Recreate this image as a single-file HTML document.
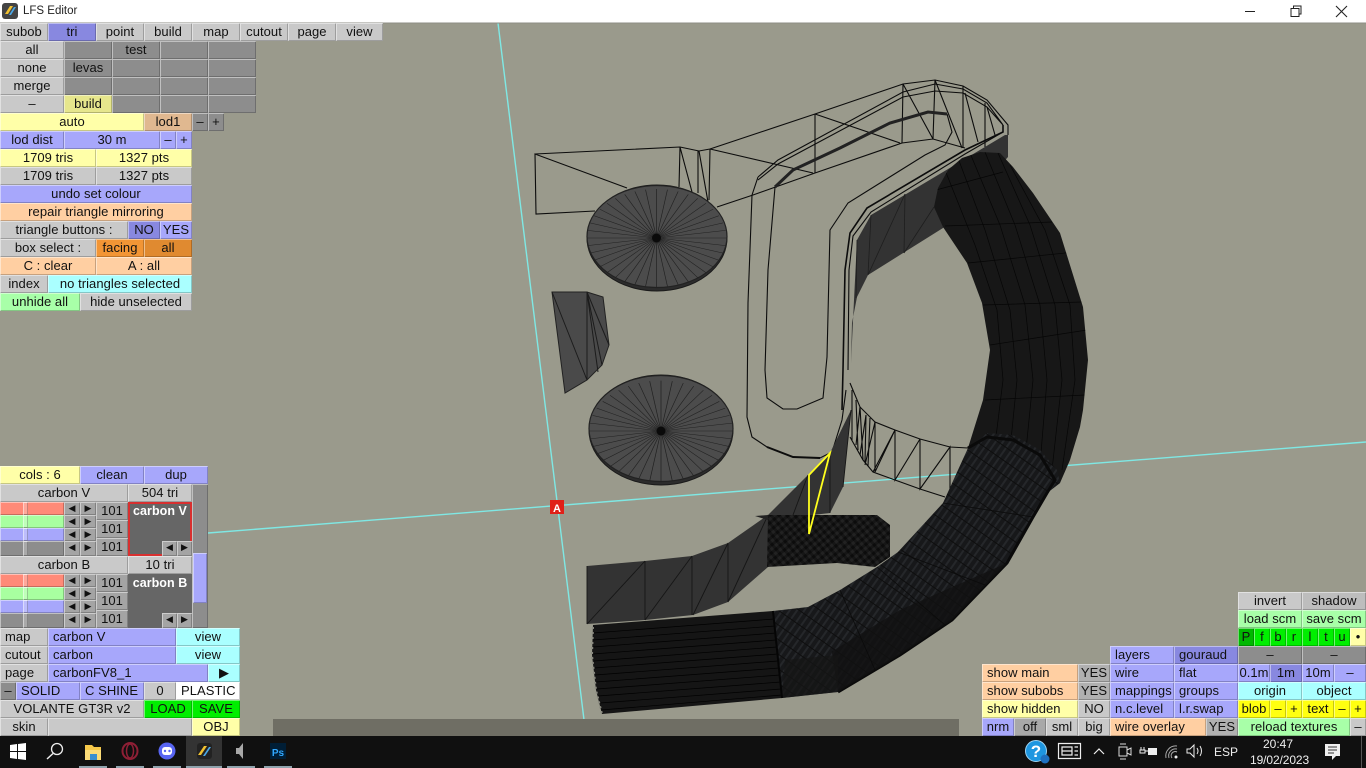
<!DOCTYPE html>
<html>
<head>
<meta charset="utf-8">
<title>LFS Editor</title>
<style>
html,body{margin:0;padding:0;width:1366px;height:768px;overflow:hidden;background:#9a9a8c}
body{position:relative;font-family:"Liberation Sans",sans-serif}
#bar{position:absolute;left:0;top:0;width:1366px;height:23px;background:#fff}
#bar span{position:absolute;left:23px;top:5px;font-size:11.5px;color:#222}
svg{position:absolute;left:0;top:0}
#ui b{position:absolute;height:18px;line-height:18px;font-weight:normal;font-size:13px;letter-spacing:.05px;text-align:center;color:#111;white-space:nowrap;overflow:hidden;box-shadow:inset 1px 1px 0 rgba(255,255,255,.45),inset -1px -1px 0 rgba(0,0,0,.22)}
#ui b.l{text-align:left;text-indent:5px}
.g{background:#c9c9c9}.d{background:#8d8d8d}.u{background:#a4a4a4}.p{background:#a7a7fb}.q{background:#8888e0}
.y{background:#ffffa8}.o{background:#ffcfa2}.c{background:#aaffff}.n{background:#a8ffa8}
.t{background:#e0b890}.m{background:#e08a30}.f{background:#f29535}.w{background:#fff}.e{background:#00ee00}.h{background:#00b800}.v{background:#ffff10}.k{background:#e6e68c}
.r{background:#ff8a78}.j{background:#a8ffa0}
#ui b.s{height:13px;line-height:13px;font-size:9px;letter-spacing:0}
#task{position:absolute;left:0;top:736px;width:1366px;height:32px;background:#101010;color:#eee}
#task i{position:absolute;top:30px;height:2px;background:#8fa3ad}
#task span{position:absolute;font-size:12px;white-space:nowrap}
</style>
</head>
<body>
<div id="bar"><span>LFS Editor</span></div>
<svg width="1366" height="768" viewBox="0 0 1366 768" fill="none">
<defs>
<pattern id="cf" width="6" height="6" patternUnits="userSpaceOnUse" patternTransform="rotate(-40)">
<rect width="6" height="6" fill="#161616"/><rect width="3" height="3" fill="#0c0c0c"/><rect x="3" y="3" width="3" height="3" fill="#222"/>
</pattern>
<pattern id="cf2" width="6" height="12" patternUnits="userSpaceOnUse" patternTransform="rotate(35)">
<rect width="6" height="12" fill="#17181a"/><rect width="2" height="12" fill="#25272a"/><rect y="5" width="6" height="1" fill="#0e0e0e"/>
</pattern>
<clipPath id="t1"><path d="M980 152L1000 153L1013 167L1033 193L1060 233L1083 307L1088 360L1083 410L1080 427L1070 460L1060 483L1047 493L968 448L983 400L990 350L982 303L967 263L943 227L934 207L938 188L948 170L962 158Z"/></clipPath>
<g id="sp" stroke="#222" stroke-width=".7">
<line x1="-70" x2="70" transform="rotate(0)"/><line x1="-70" x2="70" transform="rotate(9)"/><line x1="-70" x2="70" transform="rotate(18)"/><line x1="-70" x2="70" transform="rotate(27)"/><line x1="-70" x2="70" transform="rotate(36)"/><line x1="-70" x2="70" transform="rotate(45)"/><line x1="-70" x2="70" transform="rotate(54)"/><line x1="-70" x2="70" transform="rotate(63)"/><line x1="-70" x2="70" transform="rotate(72)"/><line x1="-70" x2="70" transform="rotate(81)"/><line x1="-70" x2="70" transform="rotate(90)"/><line x1="-70" x2="70" transform="rotate(99)"/><line x1="-70" x2="70" transform="rotate(108)"/><line x1="-70" x2="70" transform="rotate(117)"/><line x1="-70" x2="70" transform="rotate(126)"/><line x1="-70" x2="70" transform="rotate(135)"/><line x1="-70" x2="70" transform="rotate(144)"/><line x1="-70" x2="70" transform="rotate(153)"/><line x1="-70" x2="70" transform="rotate(162)"/><line x1="-70" x2="70" transform="rotate(171)"/>
</g>
</defs>
<line x1="498" y1="23" x2="586" y2="736" stroke="#7fe8e4" stroke-width="1.4"/>
<line x1="208" y1="533" x2="1366" y2="442" stroke="#7fe8e4" stroke-width="1.4"/>
<g stroke="#0c0c0c" stroke-width="1.1">
<path d="M627 188L535 154L536 214L595 211M535 154L680 147L699 151L710 149L815 114L903 84L935 80L963 86L987 100L1008 125V135"/>
<path d="M680 147L679 187M680 147L692 192M698 151V193M699 151L708 202M710 149L709 200M710 149L813 173M815 114V173M717 207L753 195L815 173L902 143L933 139L965 148M815 114L900 143"/>
<path d="M903 84L902 143M935 80L933 139M963 86V148M985 103V147M903 84L933 139M935 80L962 148M965 93L978 142M987 107L995 135"/>
<path d="M758 177L778 160L903 92L935 84L963 89L987 103L1003 125M758 180L778 164L903 97L935 91L963 93L987 107L1003 125"/>
<path d="M752 195L758 177M752 195L748 303L747 417L752 437L767 447L793 457L820 458L832 452L842 420L846 390"/>
<path d="M775 187L768 270L765 370L767 398L783 409L797 409L823 398L827 357L830 230L848 203L925 155L945 145L952 132L947 114"/>
<path d="M1003 125V132L965 150L867 208L850 233L845 270L843 370L842 410" stroke-width="1.6"/>
<path d="M1003 132L965 154L871 212L853 236L849 270L848 370"/>
<path d="M775 187L793 170L840 148L890 123L928 112L947 114" stroke="#222" stroke-width="3"/>
<path d="M767 447L793 457L820 458" stroke-width="2"/>
<path d="M850 383L860 407L875 422L895 430L920 439L950 447L968 448M850 437L863 460L873 472L895 480L920 489L945 497"/>
<path d="M875 422V472L895 430M895 430V480L920 439M920 439V489L950 447V490M873 472L895 430M895 480L920 439M920 489L950 447M852 390V440M856 400L858 450M860 407L863 460M866 415L865 462M870 418L868 466M860 407L856 445M866 415L860 455M875 422L865 465"/>
</g>
<ellipse cx="657" cy="238" rx="70" ry="53" fill="#2c2c2c" stroke="#1a1a1a"/>
<ellipse cx="657" cy="236.500" rx="70" ry="51" fill="#4c4c4c" stroke="#222" stroke-width="1.2"/>
<use href="#sp" transform="translate(656.5 238) scale(1 .7)"/>
<circle cx="656.5" cy="238" r="4.500" fill="#0a0a0a"/>
<ellipse cx="661" cy="430" rx="72" ry="55" fill="#2c2c2c" stroke="#1a1a1a"/>
<ellipse cx="661" cy="428.500" rx="72" ry="53" fill="#4c4c4c" stroke="#222" stroke-width="1.2"/>
<use href="#sp" transform="translate(661 431) scale(1.03 .72)"/>
<circle cx="661" cy="431" r="4.500" fill="#0a0a0a"/>
<path d="M552 292H587L603 297L609 345L602 365L587 380L565 393Z" fill="#4a4a4a" stroke="#222"/>
<path d="M587 292V380M552 292L587 380M587 292L602 365M587 292L598 372M587 292L609 345" stroke="#1c1c1c"/>
<path d="M871 215L1005 135H1008V157L943 228L868 275L857 297L852 323L851 363L854 300L857 240Z" fill="#333"/>
<path d="M871 215L868 275M905 194L904 253M905 194L868 275M934 207L904 253M857 240L856 298" stroke="#1e1e1e" stroke-width=".8"/>
<path d="M587 566L645 561L692 556L728 543L768 515L808 475L830 453L851 410L843 487L830 513L768 520V567L728 602L693 615L645 620L587 624Z" fill="#333"/>
<path d="M587 566V624M587 624L645 561M645 561V620M645 620L692 556M692 556V615M693 615L728 543M728 543V602M728 602L768 515M808 475L793 515M830 453V513M843 487L851 410" stroke="#161616" stroke-width=".9"/>
<path d="M755 516L768 515V520Z" fill="#222"/>
<path d="M768 515H877L890 525V557L875 567L837 563L767 567Z" fill="url(#cf)"/>
<path d="M980 152L1000 153L1013 167L1033 193L1060 233L1083 307L1088 360L1083 410L1080 427L1070 460L1060 483L1047 493L968 448L983 400L990 350L982 303L967 263L943 227L934 207L938 188L948 170L962 158Z" fill="#171717"/>
<g stroke="#060606" stroke-width=".7" clip-path="url(#t1)">
<path d="M945 170L975 245L997 310L1003 380L995 445M958 158L985 230L1010 310L1017 380L1010 450M970 153L1000 225L1025 305L1033 380L1025 460M985 152L1015 225L1040 305L1047 380L1040 465M998 153L1030 225L1055 305L1062 380L1052 470M1010 165L1045 230L1070 305L1075 380L1062 470"/>
<path d="M936 190L1003 172M945 226L1052 222M968 263L1075 252M983 305L1082 302M990 345L1087 330M985 400L1085 395"/>
</g>
<path d="M968 448L987 433L1013 435L1040 450L1057 470L1060 483L1047 493L1033 517L1007 563L952 620L900 655L838 692L808 607L840 590L877 567L898 552L943 503Z" fill="url(#cf2)"/>
<path d="M968 448L987 437L1013 440L1040 455L1055 480L1047 493L1033 517L1007 563L952 620L900 655L838 692" stroke="#0a0a0a" stroke-width="3"/>
<path d="M1007 563L952 620L900 655L838 692L826 655L900 610Z" fill="#121212" opacity=".8"/>
<path d="M943 503L1033 517M898 552L985 585M877 567L945 625M840 590L875 670" stroke="#0b0b0b" stroke-width=".8"/>
<path d="M773 611L808 607L830 640L838 692L782 698Z" fill="url(#cf2)"/>
<path d="M785 660L838 655L838 692L782 698Z" fill="#161616" opacity=".7"/>
<path d="M593 625L773 611L782 698L602 714L596 690L592 655Z" fill="#151515"/>
<g stroke="#000" stroke-width=".7">
<path d="M593 633L774 619M593 640L775 626M593 647L776 633M593 654L776 640M594 661L777 647M594 668L778 654M595 675L778 661M596 682L779 668M597 689L780 675M598 696L781 682M600 703L781 689M601 710L782 695"/>
</g>
<path d="M773 611L782 698" stroke="#050505" stroke-width="2"/>
<path d="M593 627L592 655L596 690L602 714" stroke="#8a8a80" stroke-width="2" stroke-dasharray="2 3"/>
<path d="M830 453L809 475V534Z" stroke="#ffff1e" stroke-width="1.8"/>
<rect x="273" y="719" width="686" height="17" fill="#6f6e64"/>
<rect x="550" y="500" width="14" height="14" fill="#e02018"/>
<text x="557" y="512" font-family="Liberation Sans" font-size="11" font-weight="bold" fill="#fff" text-anchor="middle">A</text>
<rect x="2" y="3" width="16" height="16" rx="3" fill="#444"/>
<path d="M5 14L10 6H13L8 14Z" fill="#f2c230"/><path d="M9 15L14 7H16L11 15Z" fill="#4aa8e8"/>
<line x1="1245" y1="11.5" x2="1255" y2="11.5" stroke="#222"/>
<path d="M1291 8.5H1299V16.5H1291ZM1293.5 8.5V6H1301V14H1299" stroke="#222"/>
<path d="M1336 6L1347 17M1347 6L1336 17" stroke="#222" stroke-width="1.1"/>
<line x1="0" y1="23" x2="1366" y2="23" stroke="#8e8e84"/>
</svg>
<div id="ui">
<b class="g" style="left:0;top:23px;width:48px">subob</b><b class="q" style="left:48px;top:23px;width:48px">tri</b><b class="g" style="left:96px;top:23px;width:48px">point</b><b class="g" style="left:144px;top:23px;width:48px">build</b><b class="g" style="left:192px;top:23px;width:48px">map</b><b class="g" style="left:240px;top:23px;width:48px">cutout</b><b class="g" style="left:288px;top:23px;width:48px">page</b><b class="g" style="left:336px;top:23px;width:47px">view</b>
<b class="g" style="left:0;top:41px;width:64px">all</b><b class="d" style="left:64px;top:41px;width:48px"></b><b class="d" style="left:112px;top:41px;width:48px">test</b><b class="d" style="left:160px;top:41px;width:48px"></b><b class="d" style="left:208px;top:41px;width:48px"></b>
<b class="g" style="left:0;top:59px;width:64px">none</b><b class="d" style="left:64px;top:59px;width:48px">levas</b><b class="d" style="left:112px;top:59px;width:48px"></b><b class="d" style="left:160px;top:59px;width:48px"></b><b class="d" style="left:208px;top:59px;width:48px"></b>
<b class="g" style="left:0;top:77px;width:64px">merge</b><b class="d" style="left:64px;top:77px;width:48px"></b><b class="d" style="left:112px;top:77px;width:48px"></b><b class="d" style="left:160px;top:77px;width:48px"></b><b class="d" style="left:208px;top:77px;width:48px"></b>
<b class="g" style="left:0;top:95px;width:64px">–</b><b class="k" style="left:64px;top:95px;width:48px">build</b><b class="d" style="left:112px;top:95px;width:48px"></b><b class="d" style="left:160px;top:95px;width:48px"></b><b class="d" style="left:208px;top:95px;width:48px"></b>
<b class="y" style="left:0;top:113px;width:144px">auto</b><b class="t" style="left:144px;top:113px;width:48px">lod1</b><b class="d" style="left:192px;top:113px;width:16px">–</b><b class="d" style="left:208px;top:113px;width:16px">+</b>
<b class="p" style="left:0;top:131px;width:64px">lod dist</b><b class="p" style="left:64px;top:131px;width:96px">30 m</b><b class="p" style="left:160px;top:131px;width:16px">–</b><b class="p" style="left:176px;top:131px;width:16px">+</b>
<b class="y" style="left:0;top:149px;width:96px">1709 tris</b><b class="y" style="left:96px;top:149px;width:96px">1327 pts</b>
<b class="g" style="left:0;top:167px;width:96px">1709 tris</b><b class="g" style="left:96px;top:167px;width:96px">1327 pts</b>
<b class="p" style="left:0;top:185px;width:192px">undo set colour</b>
<b class="o" style="left:0;top:203px;width:192px">repair triangle mirroring</b>
<b class="g" style="left:0;top:221px;width:128px">triangle buttons :</b><b class="q" style="left:128px;top:221px;width:32px">NO</b><b class="p" style="left:160px;top:221px;width:32px">YES</b>
<b class="g" style="left:0;top:239px;width:96px">box select :</b><b class="f" style="left:96px;top:239px;width:48px">facing</b><b class="m" style="left:144px;top:239px;width:48px">all</b>
<b class="o" style="left:0;top:257px;width:96px">C : clear</b><b class="o" style="left:96px;top:257px;width:96px">A : all</b>
<b class="g" style="left:0;top:275px;width:48px">index</b><b class="c" style="left:48px;top:275px;width:144px">no triangles selected</b>
<b class="n" style="left:0;top:293px;width:80px">unhide all</b><b class="g" style="left:80px;top:293px;width:112px">hide unselected</b>
<b class="y" style="left:0;top:466px;width:80px">cols : 6</b><b class="p" style="left:80px;top:466px;width:64px">clean</b><b class="p" style="left:144px;top:466px;width:64px">dup</b>
<b class="g" style="left:0;top:484px;width:128px">carbon V</b><b class="g" style="left:128px;top:484px;width:64px">504 tri</b>
<b class="d" style="left:192px;top:484px;width:16px;height:144px"></b><b class="p" style="left:193px;top:553px;width:14px;height:50px"></b>
<b class="r" style="left:0;top:502px;width:64px;height:13px"></b><b class="j" style="left:0;top:515px;width:64px;height:13px"></b><b class="p" style="left:0;top:528px;width:64px;height:13px"></b><b class="d" style="left:0;top:541px;width:64px;height:15px"></b>
<b class="g" style="left:23px;top:502px;width:5px;height:13px;background:rgba(255,255,255,.25)"></b><b class="g" style="left:23px;top:515px;width:5px;height:13px;background:rgba(255,255,255,.25)"></b><b class="g" style="left:23px;top:528px;width:5px;height:13px;background:rgba(255,255,255,.25)"></b><b class="g" style="left:23px;top:541px;width:5px;height:15px;background:rgba(255,255,255,.25)"></b>
<b class="u s" style="left:64px;top:502px;width:16px">◀</b><b class="u s" style="left:80px;top:502px;width:16px">▶</b><b class="u s" style="left:64px;top:515px;width:16px">◀</b><b class="u s" style="left:80px;top:515px;width:16px">▶</b><b class="u s" style="left:64px;top:528px;width:16px">◀</b><b class="u s" style="left:80px;top:528px;width:16px">▶</b><b class="u s" style="left:64px;top:541px;width:16px;height:15px">◀</b><b class="u s" style="left:80px;top:541px;width:16px;height:15px">▶</b>
<b class="u" style="left:96px;top:502px;width:32px">101</b><b class="u" style="left:96px;top:520px;width:32px">101</b><b class="u" style="left:96px;top:538px;width:32px">101</b>
<b style="left:128px;top:502px;width:60px;height:50px;background:#666;border:2px solid #d83030;color:#fff;font-weight:bold;font-size:12.5px;box-shadow:none;line-height:15px">carbon V</b>
<b class="u s" style="left:162px;top:541px;width:15px;height:15px">◀</b><b class="u s" style="left:177px;top:541px;width:15px;height:15px">▶</b>
<b class="g" style="left:0;top:556px;width:128px">carbon B</b><b class="g" style="left:128px;top:556px;width:64px">10 tri</b>
<b class="r" style="left:0;top:574px;width:64px;height:13px"></b><b class="j" style="left:0;top:587px;width:64px;height:13px"></b><b class="p" style="left:0;top:600px;width:64px;height:13px"></b><b class="d" style="left:0;top:613px;width:64px;height:15px"></b>
<b class="g" style="left:23px;top:574px;width:5px;height:13px;background:rgba(255,255,255,.25)"></b><b class="g" style="left:23px;top:587px;width:5px;height:13px;background:rgba(255,255,255,.25)"></b><b class="g" style="left:23px;top:600px;width:5px;height:13px;background:rgba(255,255,255,.25)"></b><b class="g" style="left:23px;top:613px;width:5px;height:15px;background:rgba(255,255,255,.25)"></b>
<b class="u s" style="left:64px;top:574px;width:16px">◀</b><b class="u s" style="left:80px;top:574px;width:16px">▶</b><b class="u s" style="left:64px;top:587px;width:16px">◀</b><b class="u s" style="left:80px;top:587px;width:16px">▶</b><b class="u s" style="left:64px;top:600px;width:16px">◀</b><b class="u s" style="left:80px;top:600px;width:16px">▶</b><b class="u s" style="left:64px;top:613px;width:16px;height:15px">◀</b><b class="u s" style="left:80px;top:613px;width:16px;height:15px">▶</b>
<b class="u" style="left:96px;top:574px;width:32px">101</b><b class="u" style="left:96px;top:592px;width:32px">101</b><b class="u" style="left:96px;top:610px;width:32px">101</b>
<b style="left:128px;top:574px;width:64px;height:54px;background:#666;color:#fff;font-weight:bold;font-size:12.5px;box-shadow:none">carbon B</b>
<b class="u s" style="left:162px;top:613px;width:15px;height:15px">◀</b><b class="u s" style="left:177px;top:613px;width:15px;height:15px">▶</b>
<b class="g l" style="left:0;top:628px;width:48px">map</b><b class="p l" style="left:48px;top:628px;width:128px">carbon V</b><b class="c" style="left:176px;top:628px;width:64px">view</b>
<b class="g l" style="left:0;top:646px;width:48px">cutout</b><b class="p l" style="left:48px;top:646px;width:128px">carbon</b><b class="c" style="left:176px;top:646px;width:64px">view</b>
<b class="g l" style="left:0;top:664px;width:48px">page</b><b class="p l" style="left:48px;top:664px;width:160px">carbonFV8_1</b><b class="c" style="left:208px;top:664px;width:32px">▶</b>
<b class="d" style="left:0;top:682px;width:16px">–</b><b class="p l" style="left:16px;top:682px;width:64px">SOLID</b><b class="p l" style="left:80px;top:682px;width:64px">C SHINE</b><b class="g" style="left:144px;top:682px;width:32px">0</b><b class="w l" style="left:176px;top:682px;width:64px">PLASTIC</b>
<b class="g" style="left:0;top:700px;width:144px">VOLANTE GT3R v2</b><b class="e" style="left:144px;top:700px;width:48px">LOAD</b><b class="e" style="left:192px;top:700px;width:48px">SAVE</b>
<b class="g" style="left:0;top:718px;width:48px">skin</b><b class="g" style="left:48px;top:718px;width:144px"></b><b class="y" style="left:192px;top:718px;width:48px">OBJ</b>
<b class="g" style="left:1238px;top:592px;width:64px">invert</b><b class="g" style="left:1302px;top:592px;width:64px;background:#bdbdbd">shadow</b>
<b class="n" style="left:1238px;top:610px;width:64px">load scm</b><b class="n" style="left:1302px;top:610px;width:64px">save scm</b>
<b class="h" style="left:1238px;top:628px;width:16px">P</b><b class="e" style="left:1254px;top:628px;width:16px">f</b><b class="e" style="left:1270px;top:628px;width:16px">b</b><b class="e" style="left:1286px;top:628px;width:16px">r</b><b class="e" style="left:1302px;top:628px;width:16px">l</b><b class="e" style="left:1318px;top:628px;width:16px">t</b><b class="e" style="left:1334px;top:628px;width:16px">u</b><b class="y" style="left:1350px;top:628px;width:16px">•</b>
<b class="p l" style="left:1110px;top:646px;width:64px">layers</b><b class="q l" style="left:1174px;top:646px;width:64px">gouraud</b><b class="d" style="left:1238px;top:646px;width:64px">–</b><b class="d" style="left:1302px;top:646px;width:64px">–</b>
<b class="o l" style="left:982px;top:664px;width:96px">show main</b><b class="g" style="left:1078px;top:664px;width:32px;background:#b0b0b0">YES</b><b class="p l" style="left:1110px;top:664px;width:64px">wire</b><b class="p l" style="left:1174px;top:664px;width:64px">flat</b><b class="p" style="left:1238px;top:664px;width:32px">0.1m</b><b class="q" style="left:1270px;top:664px;width:32px">1m</b><b class="p" style="left:1302px;top:664px;width:32px">10m</b><b class="p" style="left:1334px;top:664px;width:32px">–</b>
<b class="o l" style="left:982px;top:682px;width:96px">show subobs</b><b class="g" style="left:1078px;top:682px;width:32px;background:#b0b0b0">YES</b><b class="p l" style="left:1110px;top:682px;width:64px">mappings</b><b class="p l" style="left:1174px;top:682px;width:64px">groups</b><b class="c" style="left:1238px;top:682px;width:64px">origin</b><b class="c" style="left:1302px;top:682px;width:64px">object</b>
<b class="y l" style="left:982px;top:700px;width:96px">show hidden</b><b class="g" style="left:1078px;top:700px;width:32px">NO</b><b class="p l" style="left:1110px;top:700px;width:64px">n.c.level</b><b class="p l" style="left:1174px;top:700px;width:64px">l.r.swap</b><b class="v" style="left:1238px;top:700px;width:32px">blob</b><b class="v" style="left:1270px;top:700px;width:16px">–</b><b class="v" style="left:1286px;top:700px;width:16px">+</b><b class="v" style="left:1302px;top:700px;width:32px">text</b><b class="v" style="left:1334px;top:700px;width:16px">–</b><b class="v" style="left:1350px;top:700px;width:16px">+</b>
<b class="p" style="left:982px;top:718px;width:32px">nrm</b><b class="g" style="left:1014px;top:718px;width:32px;background:#a8a8a8">off</b><b class="g" style="left:1046px;top:718px;width:32px">sml</b><b class="g" style="left:1078px;top:718px;width:32px">big</b><b class="o l" style="left:1110px;top:718px;width:96px">wire overlay</b><b class="g" style="left:1206px;top:718px;width:32px;background:#b0b0b0">YES</b><b class="n" style="left:1238px;top:718px;width:112px">reload textures</b><b class="g" style="left:1350px;top:718px;width:16px">–</b>
</div>
<div id="task">
<div style="position:absolute;left:186px;top:0;width:36px;height:32px;background:#333"></div>
<i style="left:79px;width:28px"></i><i style="left:116px;width:28px"></i><i style="left:153px;width:28px"></i><i style="left:186px;width:36px"></i><i style="left:227px;width:28px"></i><i style="left:264px;width:28px"></i>
<svg width="1366" height="32" viewBox="0 0 1366 32" fill="none">
<path d="M10 9L17 8V15H10ZM18 8L26 7V15H18ZM10 16H17V23L10 22ZM18 16H26V24L18 23Z" fill="#fff"/>
<circle cx="57" cy="13" r="5.5" stroke="#eee" stroke-width="1.3"/><line x1="53" y1="17.5" x2="47" y2="23" stroke="#eee" stroke-width="1.5"/>
<path d="M85 9H92L94 11H101V24H85Z" fill="#f5c84a"/><path d="M85 14H101V24H85Z" fill="#fbdc78"/><rect x="90" y="18" width="7" height="6" fill="#3a8fd0"/>
<ellipse cx="130" cy="15" rx="7.5" ry="8" stroke="#8e1f35" stroke-width="2"/><ellipse cx="130" cy="15" rx="3.5" ry="7" stroke="#8e1f35" stroke-width="1.5"/>
<circle cx="167" cy="15" r="8.5" fill="#5865f2"/><rect x="162" y="11" width="10" height="8" rx="3" fill="#fff"/><circle cx="165" cy="15" r="1.2" fill="#5865f2"/><circle cx="169.5" cy="15" r="1.2" fill="#5865f2"/>
<rect x="197" y="7" width="15" height="16" rx="3" fill="#222"/><path d="M198 19L204 10H207L201 19Z" fill="#f2c230"/><path d="M203 20L209 11H211L205 20Z" fill="#4aa8e8"/>
<path d="M236 12H239L243 7V23L239 18H236Z" fill="#a8a8a8"/>
<rect x="270" y="7" width="16" height="16" fill="#001e36"/><text x="278" y="20" font-family="Liberation Sans" font-size="10" font-weight="bold" fill="#31a8ff" text-anchor="middle">Ps</text>
<circle cx="1036" cy="15" r="10.5" fill="#1e96e0"/><circle cx="1036" cy="15" r="10.5" stroke="#9fd4f4"/><text x="1036" y="21" font-family="Liberation Sans" font-size="17" font-weight="bold" fill="#fff" text-anchor="middle">?</text><circle cx="1045" cy="23" r="4.5" fill="#1e70c0"/>
<path d="M1058.5 7.5H1080.5V22.5H1058.5ZM1062 11H1072V19H1062ZM1062 15H1072M1074.5 11H1078M1074.5 15H1078M1074.5 19H1078" stroke="#eee" stroke-width="1.2"/>
<path d="M1094 18L1099 13L1104 18" stroke="#eee" stroke-width="1.2"/>
<path d="M1119 11H1127V20H1119ZM1127 14L1131 12V19L1127 17M1120 8H1126M1120 23H1126" stroke="#ddd"/>
<path d="M1141 11V14M1144 11V14M1140 14H1145V17H1140ZM1145 15H1148" stroke="#eee"/><rect x="1148" y="12" width="9" height="7" fill="#eee"/>
<path d="M1166 22A10 10 0 0 1 1177 10M1169 22A7 7 0 0 1 1177 13M1172 22A4 4 0 0 1 1177 16" stroke="#aaa"/><circle cx="1176" cy="21" r="1.5" fill="#eee"/>
<path d="M1187 13H1190L1194 9V21L1190 17H1187ZM1197 12Q1199 15 1197 18M1200 10Q1203 15 1200 20" stroke="#eee"/>
<path d="M1325 8H1340V20H1336L1332 24V20H1325Z" fill="#f0f0f0"/><path d="M1328 11H1337M1328 14H1337M1328 17H1334" stroke="#333"/>
<line x1="1361.5" y1="0" x2="1361.5" y2="32" stroke="#555"/>
</svg>
<span style="left:1214px;top:9px">ESP</span>
<span style="left:1263px;top:1px">20:47</span>
<span style="left:1250px;top:17px;letter-spacing:-.1px">19/02/2023</span>
</div>
</body>
</html>
